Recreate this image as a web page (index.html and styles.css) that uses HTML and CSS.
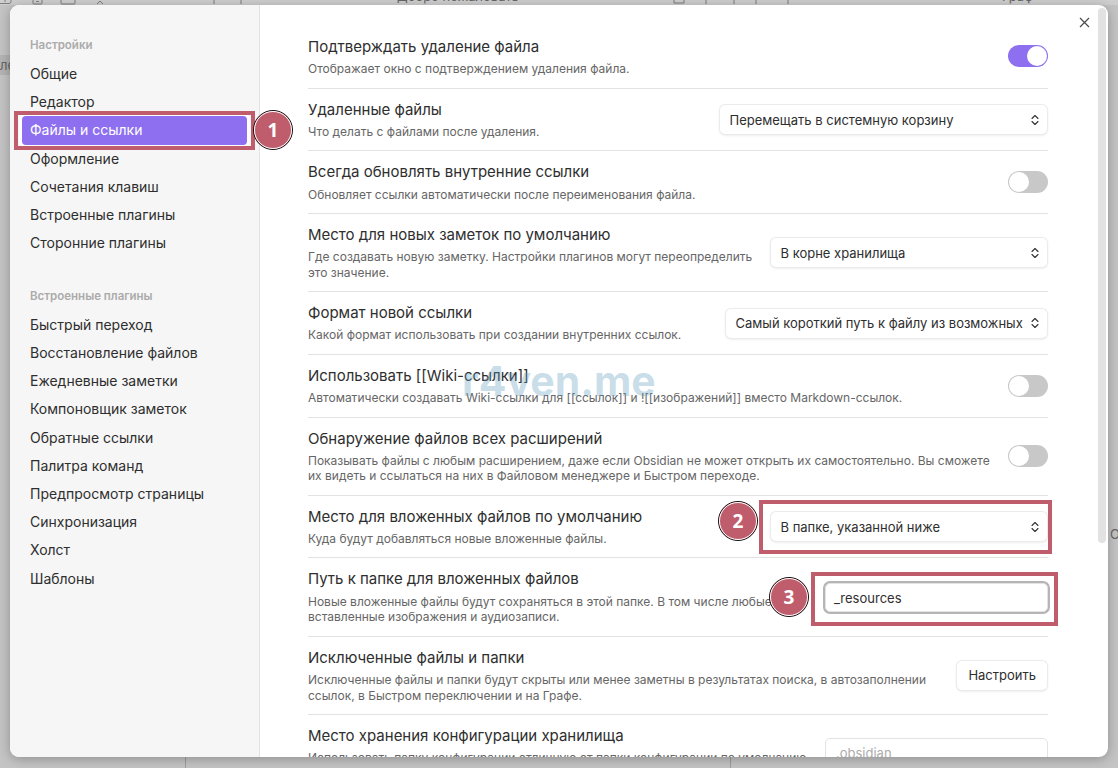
FILE: index.html
```html
<!DOCTYPE html>
<html lang="ru">
<head>
<meta charset="utf-8">
<title>Настройки</title>
<link rel="stylesheet" href="styles.css">
</head>
<body>
<div class="backdrop">
  <div class="topstrip">
    <svg class="strip-icons" width="1118" height="6" viewBox="0 0 1118 6"><path d="M0 3.5h9q2 0 2-2V0M5 0v2M33 0v3q0 1 1 1h7q1 0 1-1V0M36 1.5h3M61 0v3q0 1 1 1h12q1 0 1-1V0M97 4l3-3 3 3M214 0v4M241 0v4M674 0v3h10V0M706 0v4M734 0v4M756 0v4M788 0v4" fill="none" stroke="#7d7d7d" stroke-width="1"/></svg>
    <span class="strip-title">Добро пожаловать</span>
    <span class="strip-graph">Граф</span>
  </div>
  <div class="side-tab">ле</div>
  <div class="side-letter">O</div>
  <div class="bottom-line"></div>
  <div class="bottom-line second"></div>

  <div class="modal">
    <nav class="sidebar">
      <div class="nav-head">Настройки</div>
      <div class="nav-item">Общие</div>
      <div class="nav-item">Редактор</div>
      <div class="nav-item active">Файлы и ссылки</div>
      <div class="nav-item">Оформление</div>
      <div class="nav-item">Сочетания клавиш</div>
      <div class="nav-item">Встроенные плагины</div>
      <div class="nav-item">Сторонние плагины</div>
      <div class="nav-head second">Встроенные плагины</div>
      <div class="nav-item">Быстрый переход</div>
      <div class="nav-item">Восстановление файлов</div>
      <div class="nav-item">Ежедневные заметки</div>
      <div class="nav-item">Компоновщик заметок</div>
      <div class="nav-item">Обратные ссылки</div>
      <div class="nav-item">Палитра команд</div>
      <div class="nav-item">Предпросмотр страницы</div>
      <div class="nav-item">Синхронизация</div>
      <div class="nav-item">Холст</div>
      <div class="nav-item">Шаблоны</div>
    </nav>
    <main class="content">
      <section class="row first">
        <div class="info"><div class="name">Подтверждать удаление файла</div><div class="desc">Отображает окно с подтверждением удаления файла.</div></div>
        <div class="toggle on"></div>
      </section>
      <section class="row">
        <div class="info"><div class="name">Удаленные файлы</div><div class="desc">Что делать с файлами после удаления.</div></div>
        <div class="select w-trash">Перемещать в системную корзину<svg class="chev" width="8" height="12" viewBox="0 0 8 12"><path d="M1 4.5 4 1.5l3 3M1 7.5l3 3 3-3" fill="none" stroke="#333" stroke-width="1.1" stroke-linecap="round" stroke-linejoin="round"/></svg></div>
      </section>
      <section class="row">
        <div class="info"><div class="name">Всегда обновлять внутренние ссылки</div><div class="desc">Обновляет ссылки автоматически после переименования файла.</div></div>
        <div class="toggle"></div>
      </section>
      <section class="row">
        <div class="info"><div class="name">Место для новых заметок по умолчанию</div><div class="desc">Где создавать новую заметку. Настройки плагинов могут переопределить это значение.</div></div>
        <div class="select w-folder">В корне хранилища<svg class="chev" width="8" height="12" viewBox="0 0 8 12"><path d="M1 4.5 4 1.5l3 3M1 7.5l3 3 3-3" fill="none" stroke="#333" stroke-width="1.1" stroke-linecap="round" stroke-linejoin="round"/></svg></div>
      </section>
      <section class="row">
        <div class="info"><div class="name">Формат новой ссылки</div><div class="desc">Какой формат использовать при создании внутренних ссылок.</div></div>
        <div class="select w-link">Самый короткий путь к файлу из возможных<svg class="chev" width="8" height="12" viewBox="0 0 8 12"><path d="M1 4.5 4 1.5l3 3M1 7.5l3 3 3-3" fill="none" stroke="#333" stroke-width="1.1" stroke-linecap="round" stroke-linejoin="round"/></svg></div>
      </section>
      <section class="row">
        <div class="info"><div class="name">Использовать [[Wiki-ссылки]]</div><div class="desc">Автоматически создавать Wiki-ссылки для [[ссылок]] и ![[изображений]] вместо Markdown-ссылок.</div></div>
        <div class="toggle"></div>
      </section>
      <section class="row">
        <div class="info"><div class="name">Обнаружение файлов всех расширений</div><div class="desc">Показывать файлы с любым расширением, даже если Obsidian не может открыть их самостоятельно. Вы сможете их видеть и ссылаться на них в Файловом менеджере и Быстром переходе.</div></div>
        <div class="toggle"></div>
      </section>
      <section class="row">
        <div class="info"><div class="name">Место для вложенных файлов по умолчанию</div><div class="desc">Куда будут добавляться новые вложенные файлы.</div></div>
        <div class="select w-folder">В папке, указанной ниже<svg class="chev" width="8" height="12" viewBox="0 0 8 12"><path d="M1 4.5 4 1.5l3 3M1 7.5l3 3 3-3" fill="none" stroke="#333" stroke-width="1.1" stroke-linecap="round" stroke-linejoin="round"/></svg></div>
      </section>
      <section class="row">
        <div class="info"><div class="name">Путь к папке для вложенных файлов</div><div class="desc">Новые вложенные файлы будут сохраняться в этой папке. В том числе любые вставленные изображения и аудиозаписи.</div></div>
        <div class="input focused">_resources</div>
      </section>
      <section class="row">
        <div class="info"><div class="name">Исключенные файлы и папки</div><div class="desc">Исключенные файлы и папки будут скрыты или менее заметны в результатах поиска, в автозаполнении ссылок, в Быстром переключении и на Графе.</div></div>
        <div class="button">Настроить</div>
      </section>
      <section class="row last">
        <div class="info"><div class="name">Место хранения конфигурации хранилища</div><div class="desc">Использовать папку конфигурации отличную от папки конфигурации по умолчанию.</div></div>
        <div class="input placeholder">.obsidian</div>
      </section>
    </main>
    <svg class="close" width="11" height="11" viewBox="0 0 11 11"><path d="M1 1l9 9M10 1 1 10" fill="none" stroke="#4a4a4a" stroke-width="1.2"/></svg>
    <div class="scrollbar"></div>
  </div>

  <div class="watermark">r4ven.me</div>
  <div class="mark m1"></div>
  <div class="mark m2"></div>
  <div class="mark m3"></div>
  <div class="badge b1">1</div>
  <div class="badge b2">2</div>
  <div class="badge b3">3</div>
</div>
</body>
</html>
```
FILE: styles.css
```css
* { box-sizing: border-box; }
html, body { margin: 0; height: 100%; }
body { font-family: Inter, "Liberation Sans", sans-serif; overflow: hidden; }
.backdrop { position: relative; width: 1118px; height: 768px; background: #c4c4c4; overflow: hidden; }
.topstrip { height: 5px; position: relative; background: #cfcfcf; overflow: hidden; font-size: 13px; color: #666; }
.strip-icons { position: absolute; left: 0; top: 0; }
.strip-title { position: absolute; left: 397px; top: -12px; }
.strip-graph { position: absolute; left: 1002px; top: -12px; }
.side-tab { position: absolute; left: 0; top: 55px; width: 10px; height: 20px; line-height: 20px; font-size: 13px; color: #666; overflow: hidden; background: #b4b4b4; }
.side-letter { position: absolute; left: 1110px; top: 526px; font-size: 13px; color: #666; }
.bottom-line { position: absolute; left: 185px; top: 757px; width: 1px; height: 11px; background: #9d9d9d; }
.bottom-line.second { left: 730px; }

.modal { position: absolute; left: 10px; top: 5px; width: 1098px; height: 752px; display: flex; background: #fff; border-radius: 9px; overflow: hidden; box-shadow: 0 2px 12px rgba(0,0,0,.28); }
.sidebar { width: 250px; flex: none; background: #f6f6f6; border-right: 1px solid #e3e3e3; padding: 33px 12px 0 20px; }
.nav-head { font-size: 11.5px; font-weight: 600; color: #ababab; height: 14px; line-height: 14px; margin-bottom: 8px; }
.nav-head.second { margin-top: 32px; margin-bottom: 7.6px; }
.nav-item { height: 28.2px; line-height: 28px; font-size: 14px; color: #2e2e2e; margin-left: -8px; padding-left: 8px; border-radius: 4px; }
.nav-item.active { background: #8e6ff0; color: #fff; box-shadow: 0 0 0 3px #fff; }

.content { flex: 1; padding: 21px 60px 0 48px; overflow: hidden; }
.row { display: flex; align-items: center; justify-content: space-between; gap: 16px; padding: 11px 0 10.8px; border-top: 1px solid #e3e3e3; }
.row.first { border-top: 0; padding: 10.5px 0 11.6px; }
.row.last { min-height: 78px; align-items: flex-start; gap: 10px; }
.info { flex: 1; min-width: 0; }
.name { font-size: 15px; line-height: 19px; color: #2e2e2e; margin-bottom: 5.1px; }
.desc { font-size: 12px; line-height: 15.7px; color: #666; }
.toggle { width: 40px; height: 22px; border-radius: 11px; background: #c8c8c8; position: relative; flex: none; }
.toggle::after { content: ""; position: absolute; left: 1px; top: 1px; width: 20px; height: 20px; border-radius: 50%; background: #fff; }
.toggle.on { background: #8e6ff0; }
.toggle.on::after { left: 19px; }
.select { display: flex; align-items: center; justify-content: space-between; flex: none; height: 29px; margin-right: 1px; padding: 0 8px 0 9.5px; font-size: 13px; color: #2e2e2e; background: #fff; border-radius: 5px; box-shadow: 0 0 0 1px #ebebeb, 0 1px 3px rgba(0,0,0,.14); }
.select svg { flex: none; }
.w-trash { width: 327px; }
.w-folder { width: 276px; }
.w-link { width: 321px; }
.input { flex: none; width: 223px; height: 29px; line-height: 28px; padding: 0 10px; font-size: 13px; border-radius: 5px; }
.input.focused { color: #2e2e2e; background: #fff; border: 1px solid #e3e3e3; padding-left: 8px; box-shadow: 0 0 0 2px #b5b5b5; }
.input.placeholder { color: #ababab; border: 1px solid #e3e3e3; margin-top: 12px; }
.button { flex: none; font-size: 13px; color: #2e2e2e; height: 29px; line-height: 29px; margin-right: 1px; padding: 0 11px; background: #fff; border-radius: 5px; box-shadow: 0 0 0 1px #ebebeb, 0 1px 3px rgba(0,0,0,.14); }

.close { position: absolute; left: 1069px; top: 12px; }
.scrollbar { position: absolute; left: 1088px; top: 3px; width: 8px; height: 535px; border-radius: 4px; background: #e2e2e2; }
.watermark { position: absolute; left: 462px; top: 356px; font: 700 41px Inter, sans-serif; color: rgba(100,160,190,.35); pointer-events: none; }
.mark { position: absolute; border: 4px solid #c05d6c; pointer-events: none; }
.m1 { left: 14px; top: 111px; width: 241px; height: 39px; }
.m2 { left: 759px; top: 500px; width: 293px; height: 54px; }
.m3 { left: 811px; top: 572px; width: 247px; height: 54px; }
.badge { position: absolute; width: 40px; height: 40px; border-radius: 50%; background: #c05d6c; border: 1px solid #111; outline: 1px solid #fff; outline-offset: -2px; color: #fff; font: 700 19px "Open Sans", sans-serif; display: flex; align-items: center; justify-content: center; }
.b1 { left: 253px; top: 110px; }
.b2 { left: 718px; top: 501px; }
.b3 { left: 769px; top: 577px; }
```
